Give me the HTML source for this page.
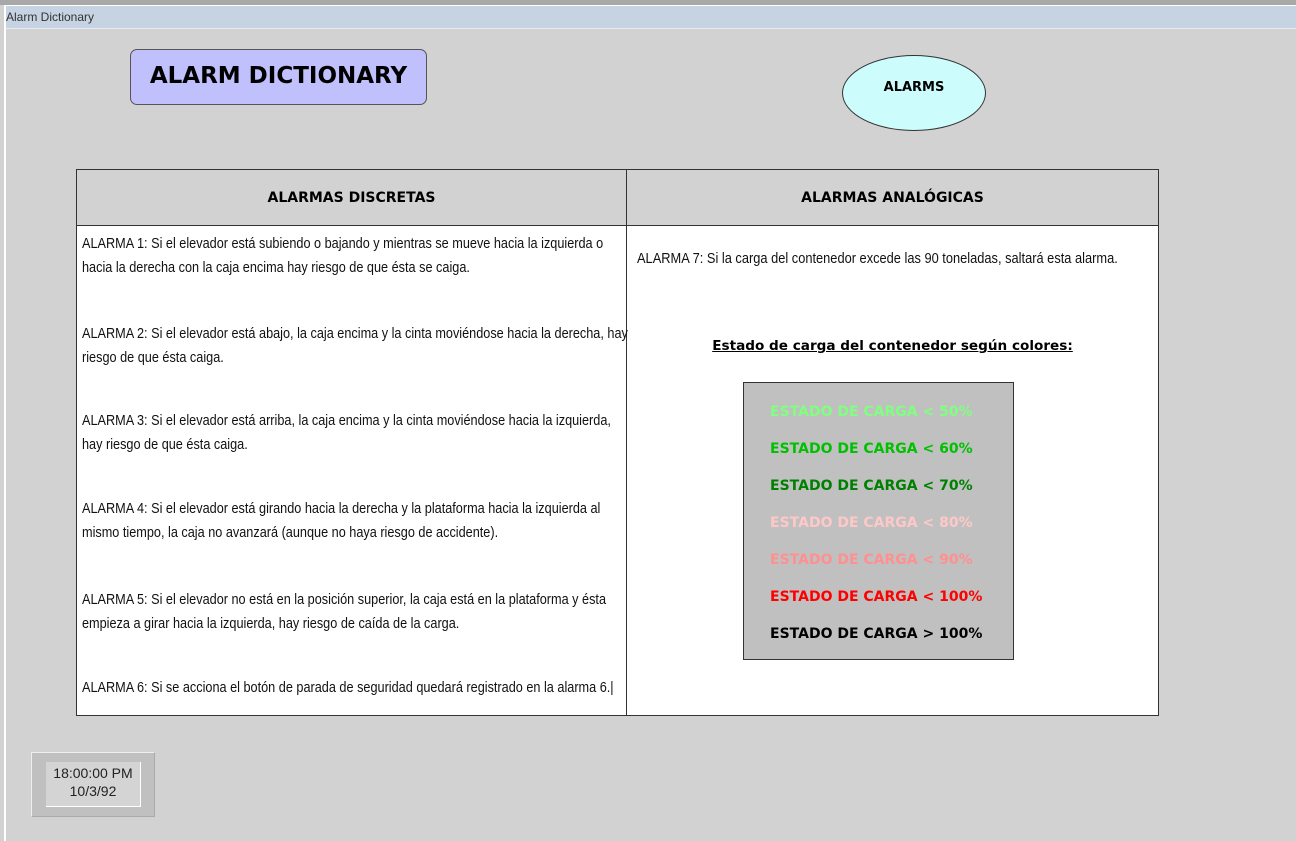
<!DOCTYPE html>
<html><head><style>
body{margin:0;width:1296px;height:840px;background:#d2d2d2;position:relative;overflow:hidden;font-family:"Liberation Sans",sans-serif}
.a{position:absolute}
.t{font-family:"Liberation Sans",sans-serif;font-size:14.5px;color:#111;line-height:24px;white-space:nowrap;transform:scaleX(0.875);transform-origin:0 0}
.c{font-family:"DejaVu Sans",sans-serif;font-weight:bold;font-size:14px;position:absolute;left:26px;white-space:nowrap}
.h{font-family:"DejaVu Sans",sans-serif;font-weight:bold}
</style></head><body>
<div class="a" style="left:0;top:0;width:1296px;height:5px;background:#a8a8a8"></div>
<div class="a" style="left:4px;top:5px;width:1292px;height:835px;border-left:2px solid #fff;border-top:1px solid #fff;background:#d2d2d2"></div>
<div class="a" style="left:6px;top:6px;width:1290px;height:22px;background:#c5d3e2;border-bottom:1px solid #e6ecf2"></div>
<div class="a" style="left:6px;top:10px;font-size:12px;color:#333">Alarm Dictionary</div>
<div class="a" style="left:130px;top:49px;width:295px;height:54px;background:#c0c0fc;border:1px solid #555;border-radius:7px"></div>
<div class="a h" style="left:130px;top:63px;width:297px;text-align:center;font-size:23px">ALARM DICTIONARY</div>
<div class="a" style="left:842px;top:55px;width:142px;height:74px;border:1px solid #333;border-radius:50%;background:#ccfcfc"></div>
<div class="a h" style="left:842px;top:80px;width:144px;text-align:center;font-size:13px">ALARMS</div>
<div class="a" style="left:76px;top:169px;width:1081px;height:545px;background:#fff;border:1px solid #333"></div>
<div class="a" style="left:77px;top:170px;width:1081px;height:55px;background:#d2d2d2;border-bottom:1px solid #333"></div>
<div class="a" style="left:626px;top:169px;width:1px;height:546px;background:#333"></div>
<div class="a h" style="left:77px;top:190px;width:549px;text-align:center;font-size:14px">ALARMAS DISCRETAS</div>
<div class="a h" style="left:627px;top:190px;width:531px;text-align:center;font-size:14px">ALARMAS ANALÓGICAS</div>
<div class="a t" style="left:82px;top:232px">ALARMA 1: Si el elevador está subiendo o bajando y mientras se mueve hacia la izquierda o<br>hacia la derecha con la caja encima hay riesgo de que ésta se caiga.</div>
<div class="a t" style="left:82px;top:322px">ALARMA 2: Si el elevador está abajo, la caja encima y la cinta moviéndose hacia la derecha, hay<br>riesgo de que ésta caiga.</div>
<div class="a t" style="left:82px;top:409px">ALARMA 3: Si el elevador está arriba, la caja encima y la cinta moviéndose hacia la izquierda,<br>hay riesgo de que ésta caiga.</div>
<div class="a t" style="left:82px;top:497px">ALARMA 4: Si el elevador está girando hacia la derecha y la plataforma hacia la izquierda al<br>mismo tiempo, la caja no avanzará (aunque no haya riesgo de accidente).</div>
<div class="a t" style="left:82px;top:588px">ALARMA 5: Si el elevador no está en la posición superior, la caja está en la plataforma y ésta<br>empieza a girar hacia la izquierda, hay riesgo de caída de la carga.</div>
<div class="a t" style="left:82px;top:676px">ALARMA 6: Si se acciona el botón de parada de seguridad quedará registrado en la alarma 6.|</div>
<div class="a t" style="left:637px;top:247px;transform:scaleX(0.885)">ALARMA 7: Si la carga del contenedor excede las 90 toneladas, saltará esta alarma.</div>
<div class="a h" style="left:627px;top:338px;width:531px;text-align:center;font-size:13.6px;text-decoration:underline">Estado de carga del contenedor según colores:</div>
<div class="a" style="left:743px;top:382px;width:269px;height:276px;background:#c0c0c0;border:1px solid #333">
<div class="c" style="top:21px;color:#80ff80">ESTADO DE CARGA &lt; 50%</div>
<div class="c" style="top:58px;color:#00c000">ESTADO DE CARGA &lt; 60%</div>
<div class="c" style="top:95px;color:#008000">ESTADO DE CARGA &lt; 70%</div>
<div class="c" style="top:132px;color:#ffc8c8">ESTADO DE CARGA &lt; 80%</div>
<div class="c" style="top:169px;color:#ff9090">ESTADO DE CARGA &lt; 90%</div>
<div class="c" style="top:206px;color:#ff0000">ESTADO DE CARGA &lt; 100%</div>
<div class="c" style="top:243px;color:#000">ESTADO DE CARGA &gt; 100%</div>
</div>
<div class="a" style="left:31px;top:752px;width:122px;height:63px;background:#c0c0c0;border:1px solid #aaa;border-top-color:#eee;border-left-color:#eee"></div>
<div class="a" style="left:46px;top:762px;width:94px;height:42px;background:#d4d4d4;border-bottom:1px solid #fff;border-right:1px solid #fff;text-align:center;font-size:14px;line-height:18px;color:#222;padding-top:2px">18:00:00 PM<br>10/3/92</div>
</body></html>
